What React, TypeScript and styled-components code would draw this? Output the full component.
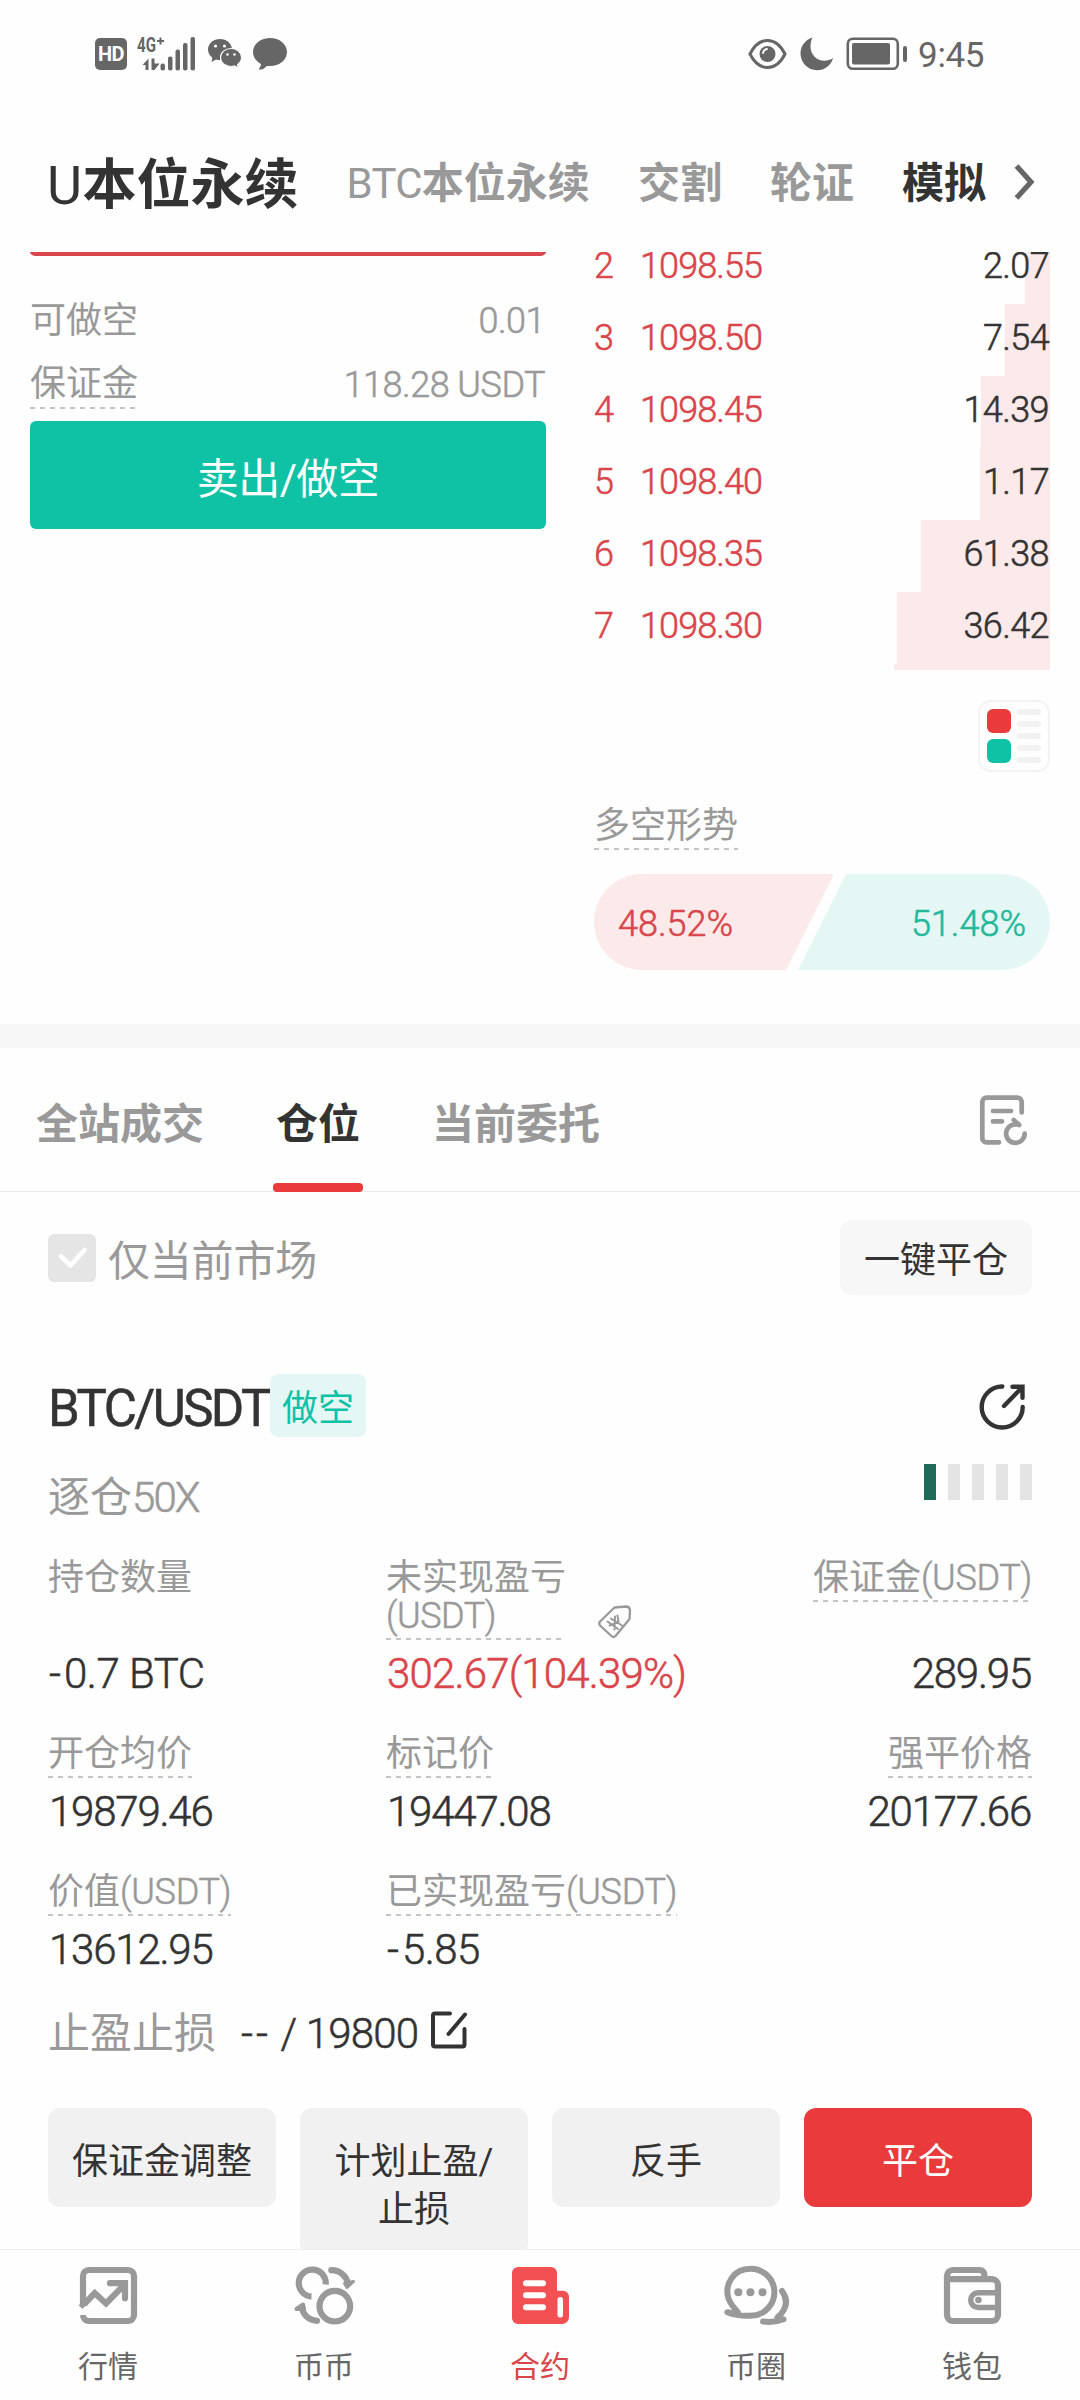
import React from 'react';
import styled, { createGlobalStyle, css } from 'styled-components';

const c = {
  text: '#333333',
  muted: '#999999',
  status: '#666666',
  red: '#d9454a',
  redFill: '#e93a3c',
  redSoft: '#fceaea',
  green: '#10c2a5',
  greenSoft: '#e5f7f5',
  grey: '#f1f1f1',
};

const Global = createGlobalStyle`
  * { box-sizing: border-box; }
  body {
    margin: 0;
    background: #fefefe;
    color: ${c.text};
    font-family: Roboto, 'Noto Sans CJK SC', sans-serif;
    font-size: 36px;
  }
  svg { display: block; flex: none; }
`;

/* Light digits with a hairline outline: a weight between light and regular. */
const figures = css`
  font-weight: 300;
  -webkit-text-stroke: 0.55px currentColor;
`;

const Page = styled.div`
  width: 1080px;
  height: 2400px;
  display: flex;
  flex-direction: column;
  overflow: hidden;
`;

const Latin = styled.span<{ $ls?: number }>`
  ${figures}
  letter-spacing: ${p => p.$ls ?? -0.5}px;
`;
const HeadLatin = styled.span<{ $ls: number }>`
  font-weight: 400;
  letter-spacing: ${p => p.$ls}px;
`;

/* ---------- status bar ---------- */

const StatusBar = styled.div`
  height: 108px;
  flex: none;
  display: flex;
  align-items: center;
  justify-content: space-between;
  padding: 0 96px 0 95px;
  color: ${c.status};
`;
const StatusGroup = styled.div`
  display: flex;
  align-items: center;
`;
const HdBadge = styled.div`
  width: 32px;
  height: 32px;
  border-radius: 5px;
  background: ${c.status};
  color: #fff;
  font-size: 20px;
  line-height: 32px;
  font-weight: 700;
  text-align: center;
  letter-spacing: -0.5px;
`;
const Network = styled.div`
  width: 59px;
  height: 48px;
  margin-left: 10px;
`;
const Clock = styled.div`
  font-size: 35px;
  line-height: 40px;
  margin-left: 10px;
  padding-top: 3px;
  letter-spacing: -0.4px;
`;

/* ---------- top navigation ---------- */

const TopTabs = styled.div`
  height: 144px;
  flex: none;
  display: flex;
  align-items: center;
  gap: 48px;
  padding: 8px 0 0 47px;
`;
const TopTab = styled.div<{ $big?: boolean; $dark?: boolean }>`
  font-size: ${p => (p.$big ? 54 : 42)}px;
  line-height: 64px;
  padding-top: ${p => (p.$big ? 4 : 0)}px;
  font-weight: 700;
  white-space: nowrap;
  color: ${p => (p.$dark ? c.text : c.muted)};
`;

/* ---------- trade area ---------- */

const Trade = styled.div`
  height: 772px;
  flex: none;
  display: grid;
  grid-template-columns: 516px 456px;
  column-gap: 48px;
  padding: 0 30px;
  overflow: hidden;
`;
const Column = styled.div`
  display: flex;
  flex-direction: column;
`;
const InputEdge = styled.div`
  height: 4px;
  border-radius: 0 0 6px 6px / 0 0 4px 4px;
  background: ${c.red};
  margin-bottom: 32px;
`;
const InfoRow = styled.div`
  height: 64px;
  display: flex;
  align-items: center;
  justify-content: space-between;
  line-height: 48px;
  padding-top: 2px;
  padding-right: 1px;
  color: ${c.muted};
`;
const Dashed = styled.span<{ $lh?: number; $pad?: number }>`
  display: inline-block;
  line-height: ${p => p.$lh ?? 45}px;
  padding-bottom: ${p => p.$pad ?? 2}px;
  background: repeating-linear-gradient(90deg, #c4c4c4 0 5px, transparent 5px 10px) left bottom / 100% 2px no-repeat;
`;
const SellButton = styled.div`
  height: 108px;
  margin-top: 5px;
  border-radius: 6px;
  background: ${c.green};
  color: #fff;
  font-size: 42px;
  line-height: 117px;
  letter-spacing: -0.6px;
  text-align: center;
`;

const BookRow = styled.div<{ $depth: number }>`
  ${figures}
  height: 72px;
  line-height: 68px;
  display: grid;
  grid-template-columns: 46px 1fr auto;
  letter-spacing: -0.9px;
  color: ${c.red};
  background: linear-gradient(${c.redSoft}, ${c.redSoft}) right / ${p => p.$depth}px 100% no-repeat;
`;
const Amount = styled.span`
  color: ${c.text};
  letter-spacing: -0.6px;
  padding-right: 1px;
`;
const BookList = styled.div`
  margin-top: -20px;
`;
const BookTail = styled.div`
  width: 156px;
  height: 6px;
  margin-left: auto;
  background: ${c.redSoft};
`;
const LayoutToggle = styled.div`
  width: 72px;
  height: 72px;
  margin: 30px 0 31px auto;
  padding: 7px;
  border: 2px solid #f3f3f3;
  border-radius: 13px;
  display: flex;
  gap: 6px;
`;
const ToggleCol = styled.div`
  width: 24px;
  display: flex;
  flex-direction: column;
  gap: 6px;
`;
const Chip = styled.div<{ $c: string }>`
  height: 24px;
  border-radius: 6px;
  background: ${p => p.$c};
`;
const Dash = styled.div`
  height: 6px;
  flex: none;
  border-radius: 3px;
  background: #f2f2f2;
`;
const Title = styled.div`
  height: 47px;
  line-height: 0;
  color: ${c.muted};
`;
const Ratio = styled.div`
  height: 96px;
  margin-top: 24px;
  display: flex;
  border-radius: 48px;
  overflow: hidden;
  line-height: 101px;
`;
const ShortSide = styled.div`
  width: 240px;
  padding-left: 24px;
  background: ${c.redSoft};
  color: ${c.red};
  clip-path: polygon(0 0, 100% 0, 192px 100%, 0 100%);
`;
const LongSide = styled.div`
  width: 252px;
  margin-left: -36px;
  padding-right: 24px;
  text-align: right;
  background: ${c.greenSoft};
  color: #22b899;
  clip-path: polygon(48px 0, 100% 0, 100% 100%, 0 100%);
`;
const Divider = styled.div`
  height: 24px;
  flex: none;
  background: #f7f7f7;
`;

/* ---------- positions ---------- */

const Positions = styled.div`
  flex: 1;
  min-height: 0;
  overflow: hidden;
`;
const TabBar = styled.div`
  height: 144px;
  display: flex;
  gap: 72px;
  padding: 0 50px 0 36px;
  border-bottom: 1px solid #e9e9e9;
`;
const Tab = styled.div<{ $active?: boolean }>`
  position: relative;
  font-size: 42px;
  line-height: 154px;
  height: 144px;
  font-weight: 700;
  color: ${p => (p.$active ? c.text : c.muted)};
  &::after {
    content: '';
    display: ${p => (p.$active ? 'block' : 'none')};
    position: absolute;
    left: -3px;
    right: -3px;
    bottom: 0;
    height: 9px;
    border-radius: 4px;
    background: ${c.redFill};
  }
`;
const TabAction = styled.div`
  margin: 45px 0 0 auto;
`;
const Filter = styled.div`
  display: flex;
  align-items: center;
  height: 75px;
  margin: 28px 48px 0;
`;
const Checkbox = styled.div`
  width: 48px;
  height: 48px;
  border-radius: 6px;
  background: #e5e5e5;
`;
const FilterLabel = styled.div`
  margin-left: 12px;
  padding-top: 9px;
  font-size: 42px;
  line-height: 60px;
  letter-spacing: -0.2px;
  color: ${c.muted};
`;
const CloseAll = styled.div`
  width: 192px;
  margin-left: auto;
  border-radius: 12px;
  background: #f7f7f7;
  line-height: 83px;
  height: 75px;
  text-align: center;
`;
const CardHead = styled.div`
  display: flex;
  align-items: center;
  height: 63px;
  margin: 79px 50px 0 48px;
`;
const Pair = styled.div`
  width: 222px;
  white-space: nowrap;
  font-size: 51px;
  font-weight: 400;
  -webkit-text-stroke: 0.5px currentColor;
  line-height: 60px;
  padding-top: 6px;
  letter-spacing: -2.6px;
`;
const Side = styled.div`
  width: 96px;
  height: 63px;
  border-radius: 8px;
  background: ${c.greenSoft};
  color: ${c.green};
  line-height: 71px;
  text-align: center;
`;
const ShareSlot = styled.div`
  margin: 4px 0 0 auto;
`;
const Leverage = styled.div`
  display: flex;
  align-items: center;
  justify-content: space-between;
  height: 90px;
  margin: 0 48px;
`;
const LeverageText = styled.div`
  padding-top: 32px;
  font-size: 42px;
  line-height: 60px;
  color: ${c.muted};
`;
const Risk = styled.div`
  display: flex;
  gap: 12px;
`;
const RiskBar = styled.div<{ $on?: boolean }>`
  width: 12px;
  height: 36px;
  background: ${p => (p.$on ? '#1f6a58' : '#e4e4e4')};
`;
const Stats = styled.div`
  display: grid;
  grid-template-columns: 338px 360px 286px;
  row-gap: 35px;
  margin: 31px 48px 0;
`;
const Cell = styled.div<{ $right?: boolean }>`
  display: flex;
  flex-direction: column;
  align-items: ${p => (p.$right ? 'flex-end' : 'flex-start')};
`;
const StatLabel = styled.div`
  display: flex;
  align-items: flex-end;
  gap: 31px;
  padding-top: 1px;
  line-height: 38px;
  white-space: nowrap;
  color: ${c.muted};
`;
const StatValue = styled.div<{ $c?: string; $ls?: number }>`
  ${figures}
  margin-top: auto;
  padding: 8px 1px 0 1px;
  font-size: 42px;
  line-height: 51px;
  white-space: nowrap;
  letter-spacing: ${p => p.$ls ?? -1.2}px;
  color: ${p => p.$c ?? c.text};
`;
const Hyphen = styled.span`
  letter-spacing: 3px;
`;
const StopRow = styled.div`
  display: flex;
  height: 70px;
  margin: 24px 48px 0;
  font-size: 42px;
  line-height: 70px;
`;
const StopLabel = styled.div`
  width: 193px;
  color: ${c.muted};
`;
const EditSlot = styled.div`
  margin: 9px 0 0 10px;
`;
const Actions = styled.div`
  display: grid;
  grid-template-columns: repeat(4, 228px);
  column-gap: 24px;
  align-items: start;
  margin: 39px 48px 0;
`;
const Action = styled.div<{ $primary?: boolean }>`
  padding: 30px 20px 21px;
  border-radius: 12px;
  line-height: 48px;
  text-align: center;
  background: ${p => (p.$primary ? c.redFill : c.grey)};
  color: ${p => (p.$primary ? '#fff' : c.text)};
`;

/* ---------- bottom navigation ---------- */

const BottomNav = styled.div`
  height: 151px;
  flex: none;
  display: grid;
  grid-template-columns: repeat(5, 1fr);
  border-top: 1px solid #eeeeee;
  background: #fefefe;
`;
const NavItem = styled.div<{ $active?: boolean }>`
  display: flex;
  flex-direction: column;
  align-items: center;
  gap: 16px;
  padding-top: 9px;
  font-size: 30px;
  line-height: 40px;
  color: ${p => (p.$active ? c.red : c.status)};
`;

/* ---------- icons ---------- */

const SpacedSvg = styled.svg<{ $left: number; $top?: number }>`
  margin-left: ${p => p.$left}px;
  margin-top: ${p => p.$top ?? 0}px;
`;

const SignalIcon = () => (
  <svg width="59" height="48" viewBox="0 -6 59 48" fill={c.status}>
    <text x="0" y="16" fontSize="20" fontWeight="700" textLength="19" lengthAdjust="spacingAndGlyphs">4G</text>
    <path d="M20 5h7M23.500 1.500v7" stroke={c.status} strokeWidth="2" />
    <path d="M5.500 29l6-6.500V34h-3v-5zM14.500 22.500h3v5h5l-5 6.500h-3z" />
    <rect x="23.500" y="27.500" width="4.500" height="7" rx="2" />
    <rect x="31" y="20.500" width="4.500" height="14" rx="2" />
    <rect x="38.500" y="13.500" width="4.500" height="21" rx="2" />
    <rect x="46" y="7" width="4.500" height="27.500" rx="2" />
    <rect x="53.500" y="1" width="4.500" height="33.500" rx="2" />
  </svg>
);
const WechatIcon = () => (
  <SpacedSvg $left={12} width="34" height="32" viewBox="0 0 34 32">
    <path d="M12 1C5.300 1 0 5.700 0 11.600c0 3.300 1.700 6.200 4.400 8.100L3.500 24l4.600-2.500c1.200.4 2.500.6 3.900.6 6.700 0 12-4.700 12-10.500S18.700 1 12 1z" fill={c.status} />
    <circle cx="7.500" cy="8" r="1.600" fill="#fff" />
    <circle cx="16.500" cy="8" r="1.600" fill="#fff" />
    <path d="M23 10.500c-5.800 0-10.500 4-10.500 9s4.700 9 10.500 9c1.200 0 2.300-.2 3.400-.5l4 2-.8-3.500c2.500-1.700 4-4.200 4-7 0-5-4.700-9-10.600-9z" fill={c.status} stroke="#fff" strokeWidth="1.200" />
    <circle cx="19.500" cy="16.500" r="1.300" fill="#fff" />
    <circle cx="26.500" cy="16.500" r="1.300" fill="#fff" />
  </SpacedSvg>
);
const BubbleIcon = () => (
  <SpacedSvg $left={11} width="34" height="34" viewBox="0 0 34 34">
    <path d="M17 1C7.600 1 0 7.200 0 15c0 5.200 3.200 9.600 8 12-.3 2-1 3.800-2.500 5.500 3.500.4 6-.8 8.200-3.600l3.300.2c9.400 0 17-6.300 17-14.100S26.400 1 17 1z" fill={c.status} />
  </SpacedSvg>
);
const EyeIcon = () => (
  <svg width="39" height="32" viewBox="0 0 39 32">
    <path d="M2 16C6.500 7 12.500 2.500 19.500 2.500S32.500 7 37 16c-4.500 9-10.500 13.500-17.500 13.500S6.500 25 2 16z" fill="none" stroke={c.status} strokeWidth="3" />
    <circle cx="19.500" cy="16" r="8" fill={c.status} />
    <path d="M15 15a5 5 0 0 1 4-4" fill="none" stroke="#fff" strokeWidth="1.800" strokeLinecap="round" />
  </svg>
);
const MoonIcon = () => (
  <SpacedSvg $left={13} width="34" height="34" viewBox="0 0 34 34">
    <path d="M12.500.5C5.500 2.500.5 8.900.5 16.500c0 9.200 7.400 16.700 16.600 16.700 7.700 0 14.200-5.200 16-12.300-2.500 1.800-5.500 2.800-8.600 2.800C16.700 23.700 10.500 17.500 10.500 9.700c0-3.400.6-6.600 2-9.200z" fill={c.status} />
  </SpacedSvg>
);
const BatteryIcon = () => (
  <SpacedSvg $left={12} width="62" height="34" viewBox="0 0 62 34">
    <rect x="1.800" y="1.800" width="50" height="30" rx="5" fill="none" stroke={c.status} strokeWidth="2.600" />
    <rect x="6" y="6" width="38" height="21.500" rx="2" fill={c.status} />
    <rect x="57" y="9" width="4" height="16" rx="2" fill={c.status} />
  </SpacedSvg>
);
const ChevronIcon = () => (
  <SpacedSvg $left={-20} $top={-5} width="22" height="36" viewBox="0 0 22 36">
    <path d="M2.500 2L17 18 2.500 34" fill="none" stroke="#666" strokeWidth="5.200" />
  </SpacedSvg>
);
const RecordsIcon = () => (
  <svg width="54" height="54" viewBox="0 0 54 54" fill="none" stroke={c.muted} strokeWidth="4.700" strokeLinecap="round" strokeLinejoin="round">
    <path d="M45.700 19.500V9a4.300 4.300 0 0 0-4.300-4.300H10.600A4.300 4.300 0 0 0 6.300 9v36a4.300 4.300 0 0 0 4.300 4.300H23" />
    <path d="M17 18h18M17 28.400h9" />
    <path d="M48.700 40.500a9.300 9.300 0 1 1-9.400-9.200h3.500M37.700 27l5.500 5" />
  </svg>
);
const ShareIcon = () => (
  <svg width="54" height="54" viewBox="0 0 54 54" fill="none" stroke={c.text} strokeWidth="4.400" strokeLinecap="round" strokeLinejoin="miter">
    <path d="M26.300 5.500A20.500 20.500 0 1 0 46.700 26" />
    <path d="M28 25L46 6.500M36.500 5.700h10v11" />
  </svg>
);
const TagIcon = () => (
  <svg width="36" height="36" viewBox="0 0 36 36" fill="none" stroke={c.muted} strokeWidth="2.300" strokeLinejoin="round" strokeLinecap="round">
    <path d="M17.500 3.500L29 2.500q3.500 0 4 3.500l-.5 9-14 17q-2 2-4 0L3 21.500q-1.500-2 0-4z" />
    <path d="M10.500 17.500L21 25M14 14.500L25 21.500M18 12.500l-.5 13M20.500 11.500l1 6.500-9 3.500" strokeWidth="2" />
  </svg>
);
const EditIcon = () => (
  <svg width="42" height="42" viewBox="0 0 42 42" fill="none" stroke={c.text} strokeWidth="4" strokeLinecap="round" strokeLinejoin="round">
    <path d="M22 5.500H7Q5 5.500 5 7.500V36.500Q5 38.500 7 38.500H34.500Q36.500 38.500 36.500 36.500V21" />
    <path d="M37 6.500L20.500 26" />
  </svg>
);

const navStroke = { fill: 'none', stroke: c.muted, strokeWidth: 6.2, strokeLinecap: 'round', strokeLinejoin: 'round' } as const;

const MarketIcon = () => (
  <svg width="72" height="72" viewBox="0 0 72 72" {...navStroke} strokeLinejoin="miter">
    <path d="M11 46V17a6 6 0 0 1 6-6h39a6 6 0 0 1 6 6v39a6 6 0 0 1-6 6H17a6 6 0 0 1-6-6" strokeLinecap="butt" />
    <path d="M9 48.500L22.700 34 34 44.500 52 26" strokeLinecap="butt" />
    <path d="M38 24.200h15v15" />
    <path d="M5 57l10-9" stroke="#fefefe" strokeWidth="3.500" strokeLinecap="butt" />
  </svg>
);
const SpotIcon = () => (
  <svg width="72" height="72" viewBox="0 0 72 72" {...navStroke}>
    <path d="M37.700 25.500A13.500 13.500 0 1 0 23.500 37.600" strokeLinecap="butt" />
    <circle cx="46.800" cy="47.200" r="15.300" />
    <path d="M43.300 11.200C52 11.200 58 17 59.800 24" />
    <path d="M56.500 24.500l9-2-6.500 6z" fill={c.muted} strokeWidth="3" />
    <path d="M29 61.800C20 61 14.500 55 14 48" />
    <path d="M8.500 50l6.500-4.500 1 4z" fill={c.muted} strokeWidth="4" />
  </svg>
);
const ContractIcon = () => (
  <svg width="72" height="72" viewBox="0 0 72 72" fill="#f25052">
    <path d="M14 8h33a6 6 0 0 1 6 6v17.700h6a6 6 0 0 1 6 6V58a7 7 0 0 1-7 7H14a6 6 0 0 1-6-6V14a6 6 0 0 1 6-6z" />
    <path d="M22 24.200h17M22 36.200h17M22 48.200h17" stroke="#fff" strokeWidth="6" strokeLinecap="round" />
    <rect x="53.500" y="38" width="5.500" height="20.500" rx="2.500" fill="#fff" />
  </svg>
);
const CommunityIcon = () => (
  <svg width="72" height="72" viewBox="0 0 72 72" {...navStroke}>
    <path d="M18 53.500c-1-2-7.500-7-9.800-15C4.500 24.500 14 9.800 30.400 9.800c13.500 0 24 10.500 24 23.500 0 12-9.500 22.500-22 23.300-8.500.6-16.500 0-25-3.400 4 1 8.500 1.500 10.600.3z" strokeWidth="6" />
    <g fill={c.muted} stroke="none">
      <circle cx="18.300" cy="33.300" r="4" />
      <circle cx="30.400" cy="33.300" r="4" />
      <circle cx="42.500" cy="33.300" r="4" />
    </g>
    <path d="M62 32c6.500 9 5 18-4.500 26.500l6 1.800c-7 2.800-14 3-20.500 2.200" strokeWidth="6" />
  </svg>
);
const WalletIcon = () => (
  <svg width="72" height="72" viewBox="0 0 72 72" {...navStroke} strokeLinecap="butt">
    <path d="M11 20V17a6 6 0 0 1 6-6h26q5.500 0 5.500 6v3" />
    <path d="M11 20.200h45a6 6 0 0 1 6 6V56a6 6 0 0 1-6 6H17a6 6 0 0 1-6-6V17" />
    <path d="M62 33.800H42a7.300 7.300 0 0 0 0 14.600h20" strokeWidth="5.500" />
    <circle cx="42.400" cy="41" r="3.300" fill={c.muted} stroke="none" />
  </svg>
);

/* ---------- data ---------- */

const asks = [
  { n: 2, price: '1098.55', amount: '2.07', depth: 25 },
  { n: 3, price: '1098.50', amount: '7.54', depth: 45 },
  { n: 4, price: '1098.45', amount: '14.39', depth: 69 },
  { n: 5, price: '1098.40', amount: '1.17', depth: 70 },
  { n: 6, price: '1098.35', amount: '61.38', depth: 129 },
  { n: 7, price: '1098.30', amount: '36.42', depth: 153 },
];

const nav = [
  { label: '行情', icon: <MarketIcon /> },
  { label: '币币', icon: <SpotIcon /> },
  { label: '合约', icon: <ContractIcon />, active: true },
  { label: '币圈', icon: <CommunityIcon /> },
  { label: '钱包', icon: <WalletIcon /> },
];

export default function App() {
  return (
    <Page>
      <Global />
      <StatusBar>
        <StatusGroup>
          <HdBadge>HD</HdBadge>
          <Network><SignalIcon /></Network>
          <WechatIcon />
          <BubbleIcon />
        </StatusGroup>
        <StatusGroup>
          <EyeIcon />
          <MoonIcon />
          <BatteryIcon />
          <Clock>9:45</Clock>
        </StatusGroup>
      </StatusBar>

      <TopTabs>
        <TopTab $big $dark><HeadLatin $ls={0.5}>U</HeadLatin>本位永续</TopTab>
        <TopTab><HeadLatin $ls={-0.7}>BTC</HeadLatin>本位永续</TopTab>
        <TopTab>交割</TopTab>
        <TopTab>轮证</TopTab>
        <TopTab $dark>模拟</TopTab>
        <ChevronIcon />
      </TopTabs>

      <Trade>
        <Column>
          <InputEdge />
          <InfoRow>
            <span>可做空</span>
            <Latin>0.01</Latin>
          </InfoRow>
          <InfoRow>
            <Dashed>保证金</Dashed>
            <Latin $ls={-0.5}>118.28 USDT</Latin>
          </InfoRow>
          <SellButton>卖出/做空</SellButton>
        </Column>
        <Column>
          <BookList>
            {asks.map(a => (
              <BookRow key={a.n} $depth={a.depth}>
                <span>{a.n}</span>
                <span>{a.price}</span>
                <Amount>{a.amount}</Amount>
              </BookRow>
            ))}
            <BookTail />
          </BookList>
          <LayoutToggle>
            <ToggleCol>
              <Chip $c={c.redFill} />
              <Chip $c={c.green} />
            </ToggleCol>
            <ToggleCol>
              {[0, 1, 2, 3, 4].map(i => <Dash key={i} />)}
            </ToggleCol>
          </LayoutToggle>
          <Title><Dashed $lh={47} $pad={0}>多空形势</Dashed></Title>
          <Ratio>
            <ShortSide><Latin $ls={0}>48.52%</Latin></ShortSide>
            <LongSide><Latin $ls={0}>51.48%</Latin></LongSide>
          </Ratio>
        </Column>
      </Trade>
      <Divider />

      <Positions>
        <TabBar>
          <Tab>全站成交</Tab>
          <Tab $active>仓位</Tab>
          <Tab>当前委托</Tab>
          <TabAction><RecordsIcon /></TabAction>
        </TabBar>
        <Filter>
          <Checkbox>
            <svg width="48" height="48" viewBox="0 0 48 48" fill="none" stroke="#fff" strokeWidth="4.500" strokeLinecap="round" strokeLinejoin="round">
              <path d="M13 22.500L22.500 31.500 36.500 16" />
            </svg>
          </Checkbox>
          <FilterLabel>仅当前市场</FilterLabel>
          <CloseAll>一键平仓</CloseAll>
        </Filter>

        <CardHead>
          <Pair>BTC/USDT</Pair>
          <Side>做空</Side>
          <ShareSlot><ShareIcon /></ShareSlot>
        </CardHead>
        <Leverage>
          <LeverageText>逐仓<Latin $ls={-1.9}>50X</Latin></LeverageText>
          <Risk>
            <RiskBar $on />
            <RiskBar />
            <RiskBar />
            <RiskBar />
            <RiskBar />
          </Risk>
        </Leverage>

        <Stats>
          <Cell>
            <StatLabel>持仓数量</StatLabel>
            <StatValue $ls={-0.5}><Hyphen>-</Hyphen>0.7 BTC</StatValue>
          </Cell>
          <Cell>
            <StatLabel>
              <Dashed $lh={38} $pad={5}>未实现盈亏<br /><Latin>(USDT)</Latin></Dashed>
              <TagIcon />
            </StatLabel>
            <StatValue $c={c.red} $ls={-0.8}>302.67(104.39%)</StatValue>
          </Cell>
          <Cell $right>
            <StatLabel><Dashed $lh={38} $pad={5}>保证金<Latin $ls={-0.3}>(USDT)</Latin></Dashed></StatLabel>
            <StatValue>289.95</StatValue>
          </Cell>
          <Cell>
            <StatLabel><Dashed $lh={38} $pad={5}>开仓均价</Dashed></StatLabel>
            <StatValue>19879.46</StatValue>
          </Cell>
          <Cell>
            <StatLabel><Dashed $lh={38} $pad={5}>标记价</Dashed></StatLabel>
            <StatValue>19447.08</StatValue>
          </Cell>
          <Cell $right>
            <StatLabel><Dashed $lh={38} $pad={5}>强平价格</Dashed></StatLabel>
            <StatValue>20177.66</StatValue>
          </Cell>
          <Cell>
            <StatLabel><Dashed $lh={38} $pad={5}>价值<Latin $ls={-0.3}>(USDT)</Latin></Dashed></StatLabel>
            <StatValue>13612.95</StatValue>
          </Cell>
          <Cell>
            <StatLabel><Dashed $lh={38} $pad={5}>已实现盈亏<Latin $ls={-0.3}>(USDT)</Latin></Dashed></StatLabel>
            <StatValue $ls={-0.6}><Hyphen>-</Hyphen>5.85</StatValue>
          </Cell>
        </Stats>

        <StopRow>
          <StopLabel>止盈止损</StopLabel>
          <Latin $ls={-0.8}><Hyphen>--</Hyphen> / 19800</Latin>
          <EditSlot><EditIcon /></EditSlot>
        </StopRow>

        <Actions>
          <Action>保证金调整</Action>
          <Action>计划止盈/<br />止损</Action>
          <Action>反手</Action>
          <Action $primary>平仓</Action>
        </Actions>
      </Positions>

      <BottomNav>
        {nav.map(n => (
          <NavItem key={n.label} $active={n.active}>
            {n.icon}
            <span>{n.label}</span>
          </NavItem>
        ))}
      </BottomNav>
    </Page>
  );
}
